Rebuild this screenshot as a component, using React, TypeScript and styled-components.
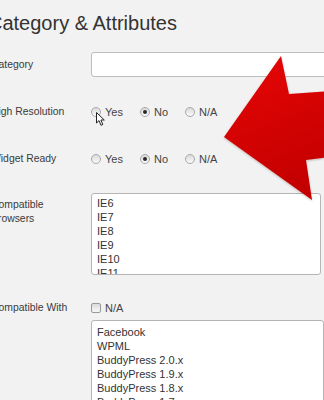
import styled, { createGlobalStyle } from 'styled-components';

const GlobalStyle = createGlobalStyle`
  html, body {
    margin: 0;
    padding: 0;
    background: #f2f2f2;
    overflow: hidden;
  }
  body {
    font-family: 'Liberation Sans', Arial, sans-serif;
    color: #333;
  }
`;

const browsers = ['IE6', 'IE7', 'IE8', 'IE9', 'IE10', 'IE11'];
const plugins = [
  'Facebook',
  'WPML',
  'BuddyPress 2.0.x',
  'BuddyPress 1.9.x',
  'BuddyPress 1.8.x',
  'BuddyPress 1.7.x',
];

interface RadioGroupProps {
  checked: string;
}

function RadioGroup({ checked }: RadioGroupProps) {
  return (
    <StyledOptions>
      {['Yes', 'No', 'N/A'].map((opt) => (
        <StyledOption key={opt}>
          <StyledRadio checked={opt === checked} />
          {opt}
        </StyledOption>
      ))}
    </StyledOptions>
  );
}

function App() {
  return (
    <StyledPage>
      <GlobalStyle />
      <StyledTitle>Category &amp; Attributes</StyledTitle>
      <StyledForm>
        <StyledRow>
          <StyledLabel>Category</StyledLabel>
          <StyledInput />
        </StyledRow>
        <StyledRow>
          <StyledLabel>High Resolution</StyledLabel>
          <RadioGroup checked="No" />
        </StyledRow>
        <StyledRow>
          <StyledLabel>Widget Ready</StyledLabel>
          <RadioGroup checked="No" />
        </StyledRow>
        <StyledRow top>
          <StyledLabel top>Compatible Browsers</StyledLabel>
          <StyledList width={230} height={82} padTop={2}>
            {browsers.map((b) => (
              <StyledItem key={b}>{b}</StyledItem>
            ))}
          </StyledList>
        </StyledRow>
        <StyledRow top extra>
          <StyledLabel small>Compatible With</StyledLabel>
          <StyledField>
            <StyledOption>
              <StyledCheckbox />
              N/A
            </StyledOption>
            <StyledList width={233} height={100} padTop={4}>
              {plugins.map((p) => (
                <StyledItem key={p}>{p}</StyledItem>
              ))}
            </StyledList>
          </StyledField>
        </StyledRow>
      </StyledForm>

      <StyledArrow width="110" height="160" viewBox="214 48 110 160">
        <defs>
          <linearGradient id="arrowFill" x1="0" y1="0" x2="0.3" y2="1">
            <stop offset="0" stopColor="#e80606" />
            <stop offset="1" stopColor="#c40000" />
          </linearGradient>
        </defs>
        <polygon
          points="224,137 281,56 289,94 330,91 330,157 306,160 312,200"
          fill="url(#arrowFill)"
        />
      </StyledArrow>

      <StyledCursor width="10" height="15" viewBox="0 0 10 15">
        <path
          d="M0.5 0.5 L0.5 11 L3 8.6 L5 13.3 L6.8 12.5 L4.9 8 L8.3 8 Z"
          fill="#fff"
          stroke="#222"
          strokeWidth="1"
          strokeLinejoin="round"
        />
      </StyledCursor>
    </StyledPage>
  );
}

export default App;

const StyledPage = styled.div`
  position: relative;
  width: 324px;
  height: 400px;
  overflow: hidden;
  background: #f2f2f2;
`;

const StyledTitle = styled.h1`
  margin: 11px 0 0 -12px;
  font-size: 20px;
  line-height: 24px;
  font-weight: normal;
  color: #333;
  white-space: nowrap;
`;

const StyledForm = styled.div`
  display: flex;
  flex-direction: column;
  gap: 22px;
  margin: 17px 0 0 -9px;
`;

const StyledRow = styled.div<{ top?: boolean; extra?: boolean }>`
  display: grid;
  grid-template-columns: 100px 1fr;
  align-items: ${({ top }) => (top ? 'start' : 'center')};
  min-height: 25px;
  margin-top: ${({ extra }) => (extra ? '3px' : '0')};
`;

const StyledLabel = styled.div<{ top?: boolean; small?: boolean }>`
  font-size: 10.4px;
  line-height: 14px;
  color: #3a3a3a;
  padding-right: 18px;
  padding-top: ${({ top, small }) => (top ? '5px' : small ? '1px' : '0')};
`;

const StyledInput = styled.div`
  height: 23px;
  width: 260px;
  background: #fff;
  border: 1px solid #bdbdbd;
  border-radius: 3px;
`;

const StyledOptions = styled.div`
  display: flex;
  align-items: center;
  gap: 17px;
`;

const StyledOption = styled.label`
  display: flex;
  align-items: center;
  gap: 4px;
  font-size: 11px;
  line-height: 16px;
  color: #444;
`;

const StyledRadio = styled.span<{ checked: boolean }>`
  position: relative;
  width: 8px;
  height: 8px;
  border-radius: 50%;
  border: 1px solid #a8a8a8;
  background: linear-gradient(#d9d9d9, #fbfbfb);
  &::after {
    content: '';
    display: ${({ checked }) => (checked ? 'block' : 'none')};
    position: absolute;
    left: 2px;
    top: 2px;
    width: 4px;
    height: 4px;
    border-radius: 50%;
    background: #2a2a2a;
  }
`;

const StyledCheckbox = styled.span`
  width: 8px;
  height: 8px;
  border: 1px solid #999;
  border-radius: 2px;
  background: linear-gradient(#dcdcdc, #f8f8f8);
`;

const StyledField = styled.div`
  display: flex;
  flex-direction: column;
  gap: 4px;
`;

const StyledList = styled.div<{ width: number; height: number; padTop: number }>`
  box-sizing: border-box;
  width: ${({ width }) => width}px;
  height: ${({ height }) => height}px;
  padding: ${({ padTop }) => padTop}px 5px 0;
  background: #fff;
  border: 1px solid #b5b5b5;
  border-radius: 3px;
  overflow: hidden;
`;

const StyledItem = styled.div`
  font-size: 11px;
  line-height: 14px;
  color: #333;
  white-space: nowrap;
`;

const StyledArrow = styled.svg`
  position: absolute;
  left: 214px;
  top: 48px;
  filter: drop-shadow(0 1px 1px rgba(80, 0, 0, 0.25));
`;

const StyledCursor = styled.svg`
  position: absolute;
  left: 96px;
  top: 112px;
`;
